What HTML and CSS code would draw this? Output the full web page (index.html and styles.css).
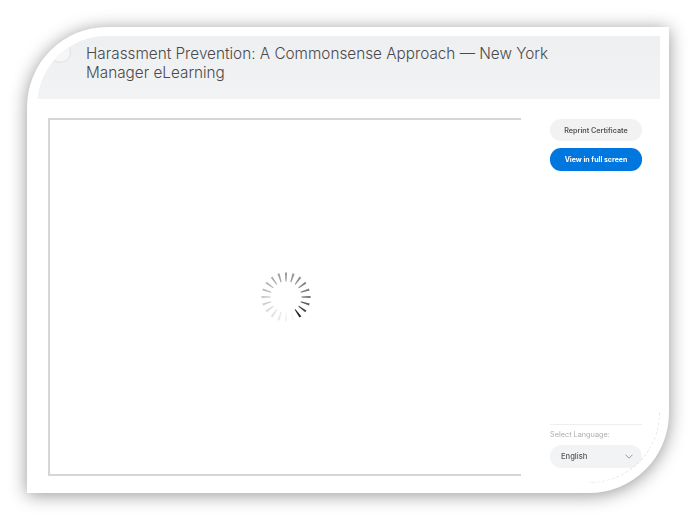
FILE: index.html
```html
<!DOCTYPE html>
<html lang="en">
<head>
<meta charset="utf-8">
<title>Harassment Prevention</title>
<link rel="stylesheet" href="styles.css">
</head>
<body>
<div class="card">
  <div class="inner">
    <header class="header">
      <span class="avatar"></span>
      <h1 class="title">Harassment Prevention: A Commonsense Approach — New York Manager eLearning</h1>
    </header>
    <main class="main">
      <section class="frame">
        <svg class="spinner" width="60" height="60" viewBox="-30 -30 60 60" aria-hidden="true">
          <defs><polygon id="tick" points="-.5,-15.5 .5,-15.5 1.1,-24.5 -1.1,-24.5"/></defs>
          <g fill="#222">
            <use href="#tick" transform="rotate(0)" fill-opacity=".45"/>
            <use href="#tick" transform="rotate(18)" fill-opacity=".48"/>
            <use href="#tick" transform="rotate(36)" fill-opacity=".52"/>
            <use href="#tick" transform="rotate(54)" fill-opacity=".56"/>
            <use href="#tick" transform="rotate(72)" fill-opacity=".6"/>
            <use href="#tick" transform="rotate(90)" fill-opacity=".65"/>
            <use href="#tick" transform="rotate(108)" fill-opacity=".72"/>
            <use href="#tick" transform="rotate(126)" fill-opacity=".82"/>
            <use href="#tick" transform="rotate(144)" fill-opacity="1"/>
            <use href="#tick" transform="rotate(162)" fill-opacity=".04"/>
            <use href="#tick" transform="rotate(180)" fill-opacity=".06"/>
            <use href="#tick" transform="rotate(198)" fill-opacity=".1"/>
            <use href="#tick" transform="rotate(216)" fill-opacity=".14"/>
            <use href="#tick" transform="rotate(234)" fill-opacity=".18"/>
            <use href="#tick" transform="rotate(252)" fill-opacity=".22"/>
            <use href="#tick" transform="rotate(270)" fill-opacity=".26"/>
            <use href="#tick" transform="rotate(288)" fill-opacity=".3"/>
            <use href="#tick" transform="rotate(306)" fill-opacity=".33"/>
            <use href="#tick" transform="rotate(324)" fill-opacity=".37"/>
            <use href="#tick" transform="rotate(342)" fill-opacity=".41"/>
          </g>
        </svg>
      </section>
      <aside class="side">
        <div class="actions">
          <button class="btn btn-light" type="button">Reprint Certificate</button>
          <button class="btn btn-blue" type="button">View in full screen</button>
        </div>
        <div class="lang">
          <div class="lang-label">Select Language:</div>
          <div class="select">
            <span>English</span>
            <svg width="8" height="5" viewBox="0 0 8 5" aria-hidden="true"><path d="M.5.7 4 4.2 7.5.7" fill="none" stroke="#999" stroke-width="1"/></svg>
          </div>
        </div>
      </aside>
    </main>
    <span class="corner-line"></span>
  </div>
</div>
</body>
</html>
```
FILE: styles.css
```css
* { box-sizing: border-box; }
html, body { margin: 0; height: 100%; background: #fff; }
body { padding: 27px; font-family: "Inter", "Liberation Sans", sans-serif; overflow: hidden; }

.card {
  width: 642px;
  height: 466px;
  background: #fff;
  border-radius: 80px 0 80px 0;
  box-shadow: 0 2px 18px rgba(0, 0, 0, .42);
  padding: 9px 9px 10px 10px;
}
.inner {
  position: relative;
  height: 100%;
  display: flex;
  flex-direction: column;
  overflow: hidden;
  border-radius: 70px 0 70px 0;
  filter: blur(.3px);
}
.header {
  height: 63px;
  flex: none;
  display: flex;
  align-items: flex-start;
  gap: 15px;
  padding: 8px 0 0 12px;
  background: linear-gradient(#eeeff1, #f2f3f5);
}
.avatar {
  flex: none;
  width: 22px;
  height: 22px;
  margin-top: -3px;
  border-radius: 50%;
  background: #f5f6f7;
  border: 1px solid #dfe0e2;
}
.title {
  width: 490px;
  margin: 0;
  font-size: 15.3px;
  font-weight: 300;
  line-height: 19px;
  color: #4a4a4a;
}
.main {
  flex: 1;
  display: flex;
  padding: 19px 18px 7px 11px;
}
.frame {
  width: 473px;
  display: flex;
  align-items: center;
  justify-content: center;
  border: 2px solid #d6d6d6;
  border-right: 0;
}
.spinner { display: block; }
.side {
  flex: 1;
  margin-left: 29px;
  margin-top: 1px;
  display: flex;
  flex-direction: column;
  justify-content: space-between;
}
.actions { display: flex; flex-direction: column; gap: 7px; }
.btn {
  height: 22px;
  padding: 0;
  border: 0;
  border-radius: 11px;
  font-family: inherit;
  font-size: 7.2px;
  font-weight: 600;
}
.btn-light { background: #f2f2f2; color: #555; }
.btn-blue { height: 23px; background: #0076df; color: #fff; font-size: 7px; font-weight: 700; }
.lang { border-top: 1px solid #eee; padding-top: 5px; margin-bottom: 8px; }
.lang-label { font-size: 7.3px; line-height: 10px; color: #adadad; margin-bottom: 5px; }
.select {
  height: 23px;
  display: flex;
  align-items: center;
  justify-content: space-between;
  padding: 0 9px 0 11px;
  border-radius: 12px;
  background: #f1f3f5;
  font-size: 7.6px;
  font-weight: 500;
  color: #555;
}
.corner-line {
  position: absolute;
  right: 0;
  bottom: 0;
  width: 70px;
  height: 70px;
  border-right: 1px dashed #e4e4e4;
  border-bottom: 1px dashed #e4e4e4;
  border-bottom-right-radius: 70px;
  pointer-events: none;
}
```
